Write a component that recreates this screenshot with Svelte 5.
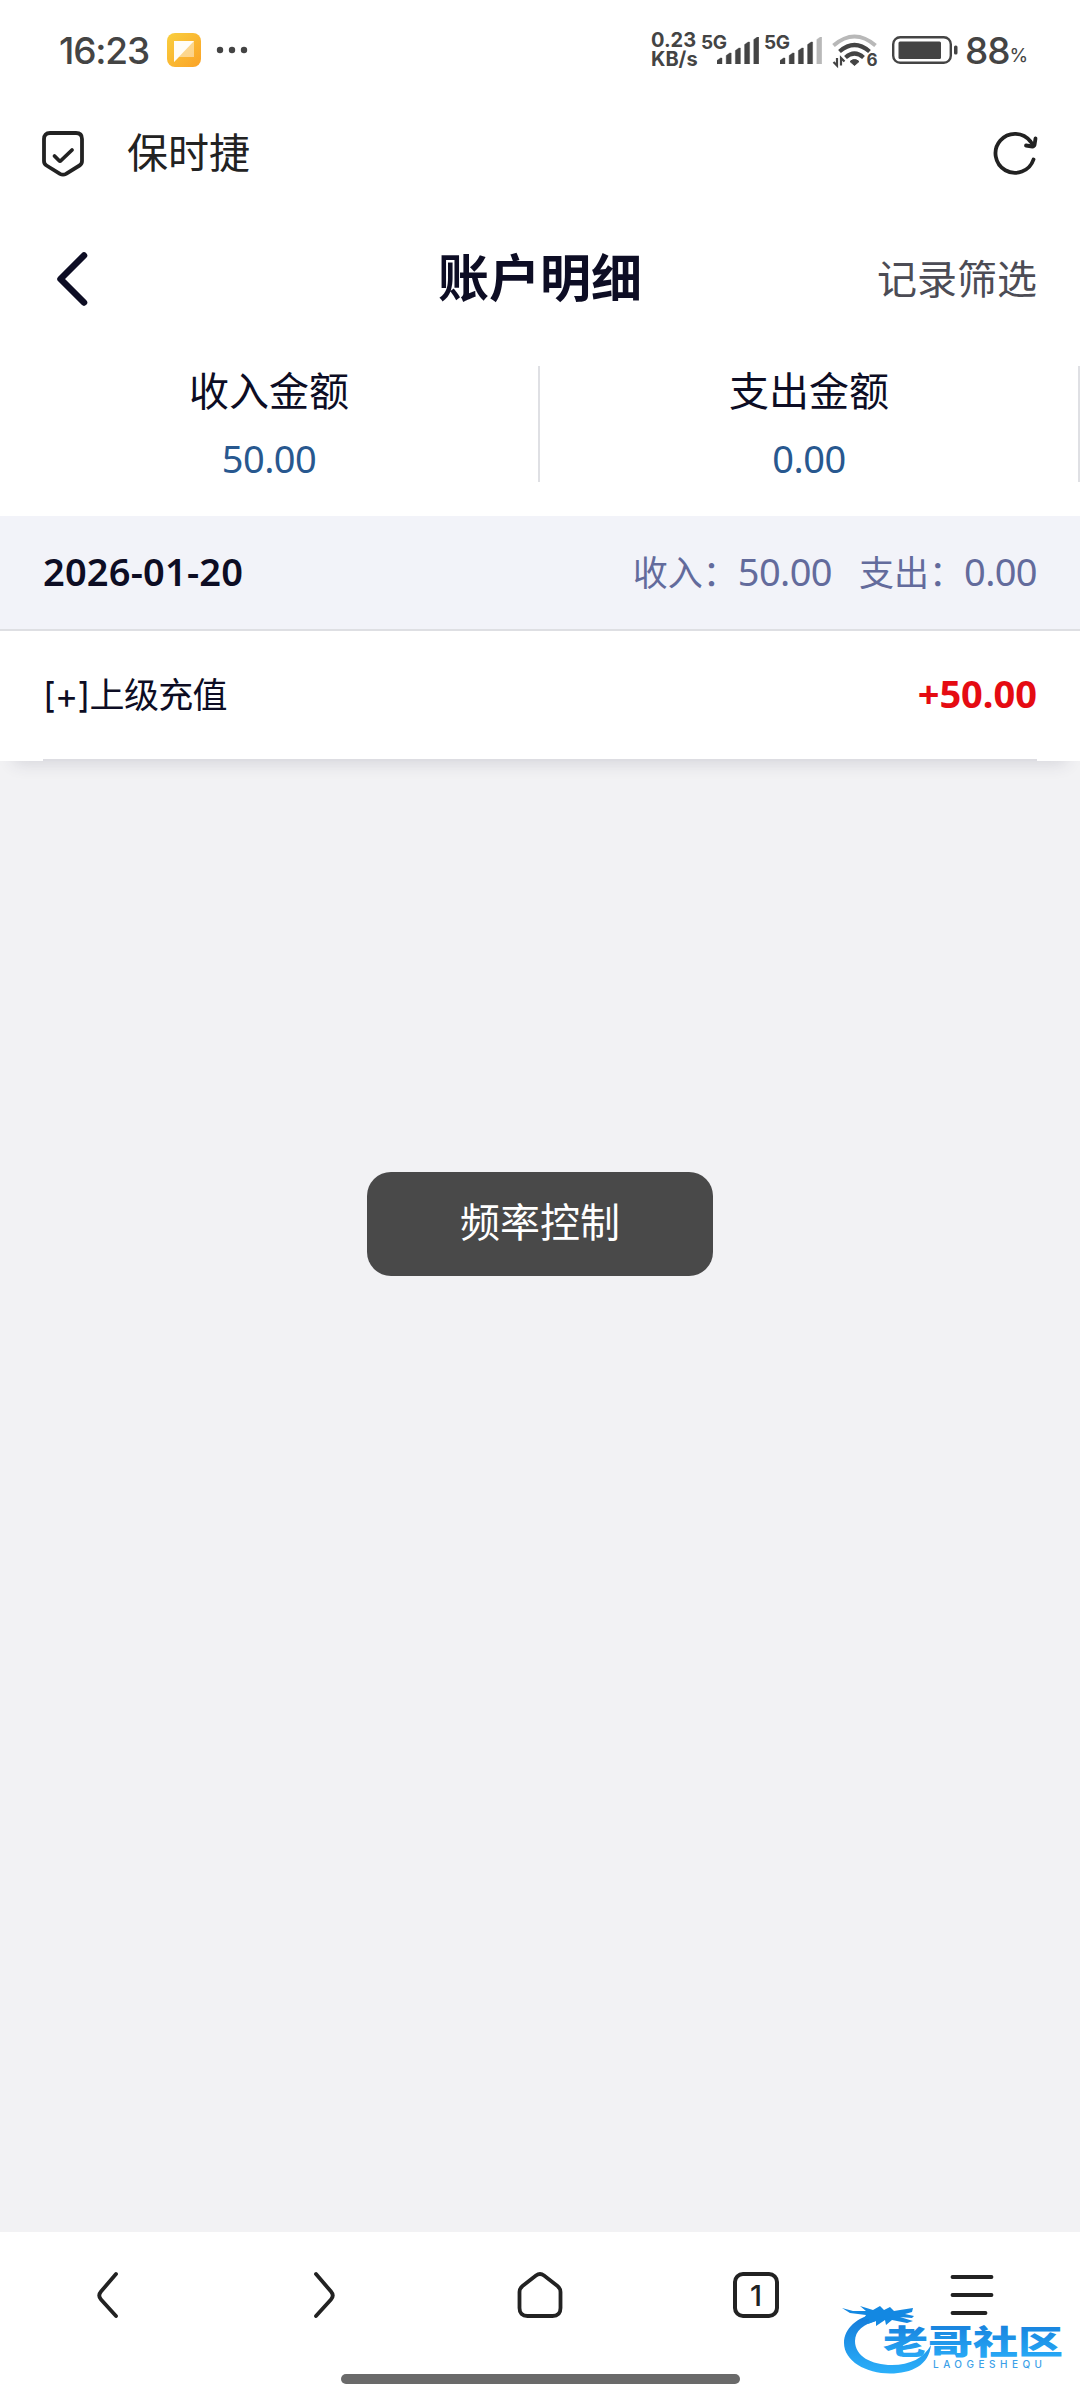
<script>
	const stats = [
		{ label: '收入金额', value: '50.00' },
		{ label: '支出金额', value: '0.00' }
	];
	const days = [
		{
			date: '2026-01-20',
			income: '50.00',
			expense: '0.00',
			rows: [{ name: '[+]上级充值', amount: '+50.00' }]
		}
	];
	const sims = [5, 4];
	const bars = [6, 11, 16, 22, 27];
	let toast = '频率控制';
</script>

<div class="screen">
	<div class="status">
		<span class="clock">16:23</span>
		<svg class="app" width="34" height="34" viewBox="0 0 34 34">
			<defs>
				<linearGradient id="note" x1="0" y1="0" x2="1" y2="1">
					<stop offset="0" stop-color="#f9cf3e" />
					<stop offset="1" stop-color="#fba227" />
				</linearGradient>
			</defs>
			<rect width="34" height="34" rx="8" fill="url(#note)" />
			<path d="M7 8H27V24H12L7 29Z" fill="#fff" opacity=".45" />
			<path d="M7 8H27L7 29Z" fill="#fff" opacity=".93" />
		</svg>
		<svg class="dots" width="32" height="8" viewBox="0 0 32 8" fill="#444">
			<circle cx="4" cy="4" r="3.2" /><circle cx="16" cy="4" r="3.2" /><circle cx="28" cy="4" r="3.2" />
		</svg>
		<div class="speed"><span>0.23</span><span>KB/s</span></div>
		{#each sims as level}
			<div class="sim">
				<span>5G</span>
				<svg width="42" height="27" viewBox="0 0 42 27">
					{#each bars as h, i}
						<path
							d="M{i * 9.2} 27V{29.5 - h}L{i * 9.2 + 3.5} {27 - h}H{i * 9.2 + 5}V27Z"
							fill={i < level ? '#444' : '#b8b8b8'}
							stroke={i < level ? '#444' : '#b8b8b8'}
							stroke-width=".4"
						/>
					{/each}
				</svg>
			</div>
		{/each}
		<svg class="wifi" width="48" height="40" viewBox="0 -2 48 40" fill="none">
			<path d="M1.5 13.5Q22.5-4.500 43.500 13.500" stroke="#b8b8b8" stroke-width="4" />
			<path d="M7.500 19.500Q22.500 6.500 37.500 19.500" stroke="#444" stroke-width="4.200" />
			<path d="M13.500 25.500Q22.500 17.500 31.500 25.500" stroke="#444" stroke-width="4.200" />
			<path d="M18 29.500Q22.500 25.500 27 29.500L22.500 33.500Z" fill="#444" stroke="#444" stroke-linejoin="round" />
			<path d="M5 26V33.500L1.500 30M9 33.500V26L12.500 29.500" stroke="#444" stroke-width="2.200" />
			<text x="34.500" y="34">6</text>
		</svg>
		<svg class="battery" width="66" height="28" viewBox="0 0 66 28">
			<rect x="1.200" y="1.200" width="57.600" height="25.600" rx="7" fill="none" stroke="#444" stroke-width="2.400" />
			<rect x="6.500" y="5.500" width="42.500" height="17.500" rx="1.500" fill="#444" />
			<rect x="62" y="9.500" width="3.500" height="9" rx="1.500" fill="#444" />
		</svg>
		<span class="percent">88</span><span class="sign">%</span>
	</div>

	<div class="browser">
		<svg width="44" height="48" viewBox="0 0 44 48" fill="none" stroke="#222" stroke-width="3.800" stroke-linejoin="round" stroke-linecap="round">
			<path d="M9 3H35Q41 3 41 9V31Q41 34 38.500 35.500L25 43.800Q22 45.500 19 43.800L5.500 35.500Q3 34 3 31V9Q3 3 9 3Z" />
			<path d="M13.500 26L18 30.500Q19 31.500 20 30.500L31 20" />
		</svg>
		<span>保时捷</span>
		<svg class="reload" width="46" height="46" viewBox="0 0 46 46" fill="none" stroke="#222" stroke-width="3.800" stroke-linecap="round" stroke-linejoin="round">
			<path d="M41.500 29.500A19.500 19.500 0 1 1 38.500 11.500L41 15" />
			<path d="M43.500 8.500L42.500 15Q42 16.500 40.500 16.500L34 15.500" />
		</svg>
	</div>

	<div class="panel">
		<div class="nav">
			<svg width="32" height="54" viewBox="0 0 32 54" fill="none" stroke="#0d0d24" stroke-width="6.500" stroke-linecap="round" stroke-linejoin="round">
				<path d="M28 3.500L4.500 27L28 50.500" />
			</svg>
			<h1>账户明细</h1>
			<span class="filter">记录筛选</span>
		</div>

		<div class="stats">
			{#each stats as s}
				<div class="stat">
					<span class="label">{s.label}</span>
					<span class="value">{s.value}</span>
				</div>
			{/each}
		</div>

		{#each days as day}
			<div class="day">
				<b>{day.date}</b>
				<div class="sum">
					<span>收入：</span><span class="num">{day.income}</span>
					<span class="out">支出：</span><span class="num">{day.expense}</span>
				</div>
			</div>
			{#each day.rows as row}
				<div class="row">
					<span>{row.name}</span>
					<b>{row.amount}</b>
				</div>
			{/each}
		{/each}
	</div>

	<div class="space"></div>

	<div class="tabbar">
		<svg width="48" height="48" viewBox="0 0 48 48">
			<path d="M32 3L17 20.500Q13.500 24.500 17 28.500L32 45" />
		</svg>
		<svg width="48" height="48" viewBox="0 0 48 48">
			<path d="M16 3L31 20.500Q34.500 24.500 31 28.500L16 45" />
		</svg>
		<svg width="48" height="48" viewBox="0 0 48 48">
			<path d="M3.500 21Q3.500 17.500 6.500 15L20 4.500Q24 1.500 28 4.500L41.500 15Q44.500 17.500 44.500 21V37Q44.500 45 36.500 45H11.500Q3.500 45 3.500 37Z" />
		</svg>
		<div class="pages"><span>1</span></div>
		<svg width="48" height="48" viewBox="0 0 48 48">
			<path d="M4.500 6H43.500M4.500 24H43.500M4.500 42H37.500" />
		</svg>
	</div>
	<div class="home"><i></i></div>

	{#if toast}
		<div class="toast">{toast}</div>
	{/if}

	<svg class="mark" width="230" height="78" viewBox="0 0 230 78">
		<defs>
			<linearGradient id="sea" x1="0" y1="0" x2="0" y2="1">
				<stop offset="0" stop-color="#1479d8" />
				<stop offset="1" stop-color="#2bb0fa" />
			</linearGradient>
		</defs>
		<path fill="url(#sea)" d="M34 11C18 14 4 25 4 40C4 58 26 70.500 50 70.500C72 70.500 89 62 91 42C84 55 70 62 52 62C31 62 15 53 15 38C15 28 23 21 39 17Z" />
		<path fill="#1388e2" d="M2 5L13 8L26 8L20 3L33 7L40 3L44 7L50 4L54 8L60 7L73 5L72 9L65 11L74 13L72 15L60 14L73 18L67 20L52 17L46 22L45 17L36 23L36 18L28 21L29 16L23 17L26 12L10 10Z" />
		<text class="cn" x="43" y="51" textLength="180" lengthAdjust="spacingAndGlyphs">老哥社区</text>
		<text class="en" x="93" y="65" textLength="109" lengthAdjust="spacing">LAOGESHEQU</text>
	</svg>
</div>

<style>
	:global(body) {
		margin: 0;
		background: #f2f2f4;
	}
	.screen {
		position: relative;
		display: flex;
		flex-direction: column;
		width: 1080px;
		height: 2400px;
		overflow: hidden;
		background: #f2f2f4;
		font-family: Inter, 'Noto Sans CJK SC', sans-serif;
		color: #0d0d24;
		white-space: nowrap;
	}
	svg {
		display: block;
		flex: none;
	}
	.status {
		display: flex;
		align-items: center;
		height: 100px;
		padding-left: 59px;
		background: #fff;
		color: #444;
	}
	.clock {
		width: 108px;
		font-size: 37px;
		font-weight: 500;
		letter-spacing: -1.2px;
	}
	.dots {
		margin-left: 15px;
	}
	.speed {
		display: flex;
		flex-direction: column;
		width: 50px;
		margin-left: 403px;
		font-size: 20px;
		line-height: 19px;
		font-weight: 700;
	}
	.sim {
		display: flex;
		width: 63px;
	}
	.sim span {
		width: 16px;
		margin-top: -4px;
		font-size: 19px;
		line-height: 19px;
		font-weight: 700;
		letter-spacing: -0.5px;
	}
	.wifi {
		margin-left: 5px;
	}
	.wifi text {
		font-size: 17px;
		font-weight: 700;
		fill: #444;
	}
	.battery {
		margin-left: 12px;
	}
	.percent {
		margin-left: 7px;
		font-size: 37px;
		font-weight: 500;
		letter-spacing: -1px;
	}
	.sign {
		margin-top: 10px;
		font-size: 19px;
	}
	.browser {
		display: flex;
		align-items: center;
		height: 108px;
		padding: 0 42px 0 41px;
		background: #fff;
		color: #222;
		font-size: 41px;
	}
	.browser span {
		margin: -3px 0 0 42px;
		line-height: 60px;
	}
	.reload {
		margin: -2px 0 0 auto;
	}
	.panel {
		background: #fff;
		box-shadow: 0 16px 16px -14px rgba(50, 50, 80, 0.16);
	}
	.nav {
		display: grid;
		grid-template-columns: 1fr auto 1fr;
		align-items: center;
		height: 142px;
		padding: 0 43px;
	}
	.nav svg {
		margin-left: 13px;
	}
	h1 {
		margin: 0;
		font-size: 51px;
		line-height: 60px;
		font-weight: 700;
	}
	.filter {
		justify-self: end;
		margin-top: -5px;
		color: #4c4c55;
		font-size: 40px;
	}
	.stats {
		display: flex;
		height: 166px;
	}
	.stat {
		display: flex;
		flex-direction: column;
		align-items: center;
		box-sizing: border-box;
		width: 540px;
		height: 116px;
		margin-top: 16px;
		border-right: 2px solid #dfe0e4;
	}
	.label {
		font-size: 40px;
		line-height: 52px;
	}
	.value,
	.num,
	b {
		font-family: 'Noto Sans', sans-serif;
	}
	.value {
		margin-top: 17px;
		color: #28588f;
		font-size: 38px;
		line-height: 46px;
		letter-spacing: -0.5px;
	}
	.day {
		display: flex;
		align-items: center;
		justify-content: space-between;
		height: 113px;
		padding: 0 43px;
		border-bottom: 2px solid #dedfe3;
		background: #f2f3f9;
	}
	.day b {
		margin-top: -4px;
		font-size: 38px;
		font-weight: 600;
		letter-spacing: 0.2px;
	}
	.sum {
		display: flex;
		align-items: baseline;
		margin-top: -4px;
		color: #636b9c;
		font-size: 35px;
	}
	.num {
		font-size: 38px;
		letter-spacing: -0.6px;
	}
	.out {
		margin-left: 27px;
	}
	.row {
		display: flex;
		align-items: center;
		justify-content: space-between;
		height: 128px;
		margin: 0 43px;
		border-bottom: 2px solid #dddde2;
		font-size: 35px;
	}
	.row span {
		margin-top: -6px;
		letter-spacing: -0.7px;
	}
	.row b {
		margin-top: -4px;
		color: #e50b12;
		font-size: 38px;
		font-weight: 700;
	}
	.space {
		flex: 1;
	}
	.tabbar {
		display: flex;
		justify-content: space-around;
		align-items: center;
		height: 126px;
		background: #fff;
	}
	.tabbar svg {
		fill: none;
		stroke: #222;
		stroke-width: 3.8;
		stroke-linecap: round;
		stroke-linejoin: round;
	}
	.pages {
		display: flex;
		align-items: center;
		justify-content: center;
		box-sizing: border-box;
		width: 46px;
		height: 46px;
		margin: 0 1px;
		border: 4px solid #222;
		border-radius: 10px;
		color: #222;
		font-size: 29px;
		font-weight: 500;
	}
	.home {
		display: flex;
		justify-content: center;
		align-items: flex-start;
		height: 42px;
		background: #fff;
	}
	.home i {
		width: 399px;
		height: 10px;
		margin-top: 16px;
		border-radius: 5px;
		background: #6a6a6a;
	}
	.toast {
		position: absolute;
		top: 1172px;
		left: 367px;
		width: 346px;
		height: 104px;
		border-radius: 24px;
		background: #494949;
		color: #fff;
		font-size: 40px;
		line-height: 102px;
		text-align: center;
	}
	.mark {
		position: absolute;
		top: 2303px;
		left: 840px;
	}
	.cn {
		font-family: 'Noto Sans CJK SC', sans-serif;
		font-size: 33px;
		font-weight: 900;
		fill: url(#sea);
	}
	.en {
		font-size: 10px;
		font-weight: 500;
		fill: #3b9fe8;
	}
</style>
